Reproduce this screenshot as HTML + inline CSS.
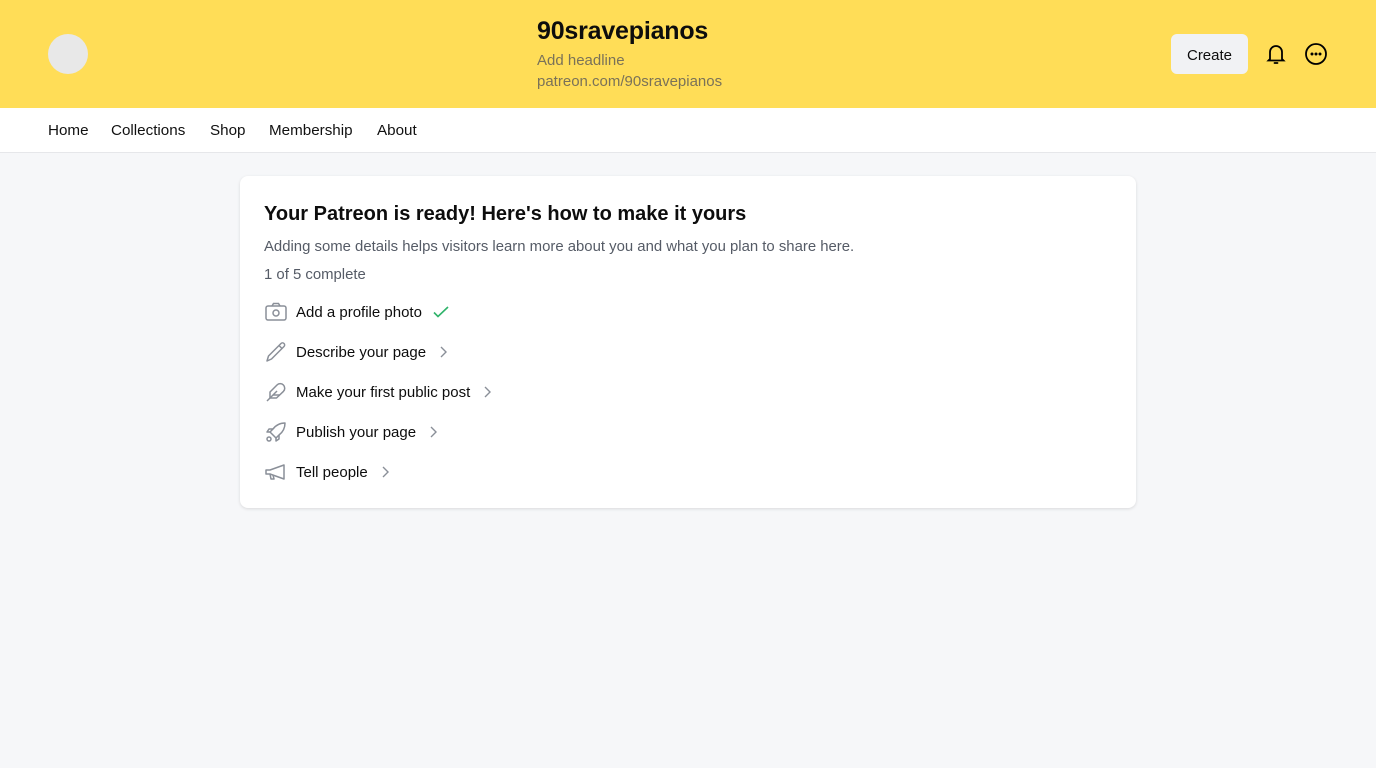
<!DOCTYPE html>
<html><head><meta charset="utf-8"><style>
*{margin:0;padding:0;box-sizing:border-box}
body{width:1376px;height:768px;background:#f6f7f9;font-family:"Liberation Sans",sans-serif;color:#0d0d0d;overflow:hidden;position:relative}
.hdr{position:absolute;left:0;top:0;width:1376px;height:108px;background:#ffdd57}
.av{position:absolute;left:48px;top:34px;width:40px;height:40px;border-radius:50%;background:#e8e8e8}
.name{position:absolute;left:537px;top:17px;font-size:25px;font-weight:bold;letter-spacing:-0.2px}
.sub{position:absolute;left:537px;font-size:15px;color:#7a7258}
.create{position:absolute;left:1171px;top:34px;width:77px;height:40px;border-radius:6px;background:#f1f2f4;font-size:15px;line-height:40px;padding-top:2px;text-align:center}
.nav{position:absolute;left:0;top:108px;width:1376px;height:45px;background:#fff;border-bottom:1px solid #e6e7ea}
.nav span{position:absolute;top:14px;font-size:15.2px;color:#111}
.card{position:absolute;left:240px;top:176px;width:896px;height:332px;background:#fff;border-radius:8px;box-shadow:0 1px 3px rgba(0,0,0,.12)}
.t{position:absolute;left:24px;top:27px;font-size:20px;font-weight:bold}
.d{position:absolute;left:24px;font-size:14.9px;color:#555b66}
.row{position:absolute;left:24px;height:24px;display:flex;align-items:center;font-size:15px}
.row svg.i{width:24px;height:24px;margin-right:8px}
.row svg.c{margin-left:10px}
</style></head><body>
<div class="hdr">
<div class="av"></div>
<div class="name">90sravepianos</div>
<div class="sub" style="top:52px">Add headline</div>
<div class="sub" style="top:73px">patreon.com/90sravepianos</div>
<div class="create">Create</div>
<svg style="position:absolute;left:1264px;top:42px" width="24" height="24" viewBox="0 0 24 24" fill="none" stroke="#000" stroke-width="1.8" stroke-linecap="round"><path d="M6 17V10a6 6 0 0 1 12 0v7l1.5 1.5h-15L6 17z"/><path d="M10.5 21h3"/></svg>
<svg style="position:absolute;left:1304px;top:42px" width="24" height="24" viewBox="0 0 24 24" fill="none" stroke="#000" stroke-width="1.8"><circle cx="12" cy="12" r="10"/><circle cx="8" cy="12" r=".6" fill="#000"/><circle cx="12" cy="12" r=".6" fill="#000"/><circle cx="16" cy="12" r=".6" fill="#000"/></svg>
</div>
<div class="nav">
<span style="left:48px">Home</span><span style="left:111px">Collections</span><span style="left:210px">Shop</span><span style="left:269px">Membership</span><span style="left:377px">About</span>
</div>
<div class="card">
<div class="t">Your Patreon is ready! Here's how to make it yours</div>
<div class="d" style="top:63px">Adding some details helps visitors learn more about you and what you plan to share here.</div>
<div class="d" style="top:91px">1 of 5 complete</div>
<div class="row" style="top:124px"><svg class="i" viewBox="0 0 24 24" fill="none" stroke="#8a8f98" stroke-width="1.5"><rect x="2" y="6" width="20" height="14" rx="2"/><path d="M8 6l1.5-2.5h5L16 6"/><circle cx="12" cy="13" r="3"/></svg>Add a profile photo<svg class="c" width="18" height="18" viewBox="0 0 18 18" fill="none" stroke="#2fb36a" stroke-width="1.6"><path d="M2 9.5l4 4L16 4"/></svg></div>
<div class="row" style="top:164px"><svg class="i" viewBox="0 0 24 24" fill="none" stroke="#8a8f98" stroke-width="1.5" stroke-linejoin="round"><path d="M3 21l1.5-5L17 3.5a2.1 2.1 0 0 1 3 3L7.5 19 3 21z"/><path d="M15 5.5l3 3"/></svg>Describe your page<svg class="c" width="14" height="14" viewBox="0 0 14 14" fill="none" stroke="#8a8f98" stroke-width="1.4"><path d="M5 2l5 5-5 5"/></svg></div>
<div class="row" style="top:204px"><svg class="i" viewBox="0 0 24 24" fill="none" stroke="#8a8f98" stroke-width="1.5" stroke-linejoin="round"><path d="M3 21L13 11"/><path d="M6 18V12l7-7a4.5 4.5 0 0 1 6.4 6.4L12.5 18H6z"/><path d="M9 15h7"/></svg>Make your first public post<svg class="c" width="14" height="14" viewBox="0 0 14 14" fill="none" stroke="#8a8f98" stroke-width="1.4"><path d="M5 2l5 5-5 5"/></svg></div>
<div class="row" style="top:244px"><svg class="i" viewBox="0 0 24 24" fill="none" stroke="#8a8f98" stroke-width="1.5" stroke-linejoin="round"><path d="M9 15l-3-3 3-3c3-4 7-6 12-6 0 5-2 9-6 12l-3 3-3-3z"/><path d="M9 9H5l-2 3h3M15 15v4l-3 2v-3"/><circle cx="5" cy="19" r="2"/></svg>Publish your page<svg class="c" width="14" height="14" viewBox="0 0 14 14" fill="none" stroke="#8a8f98" stroke-width="1.4"><path d="M5 2l5 5-5 5"/></svg></div>
<div class="row" style="top:284px"><svg class="i" viewBox="0 0 24 24" fill="none" stroke="#8a8f98" stroke-width="1.5" stroke-linejoin="round"><path d="M2 10h4l14-5v14L6 14H2z"/><path d="M6 14l1 5h3l-1-4"/></svg>Tell people<svg class="c" width="14" height="14" viewBox="0 0 14 14" fill="none" stroke="#8a8f98" stroke-width="1.4"><path d="M5 2l5 5-5 5"/></svg></div>
</div>
</body></html>
